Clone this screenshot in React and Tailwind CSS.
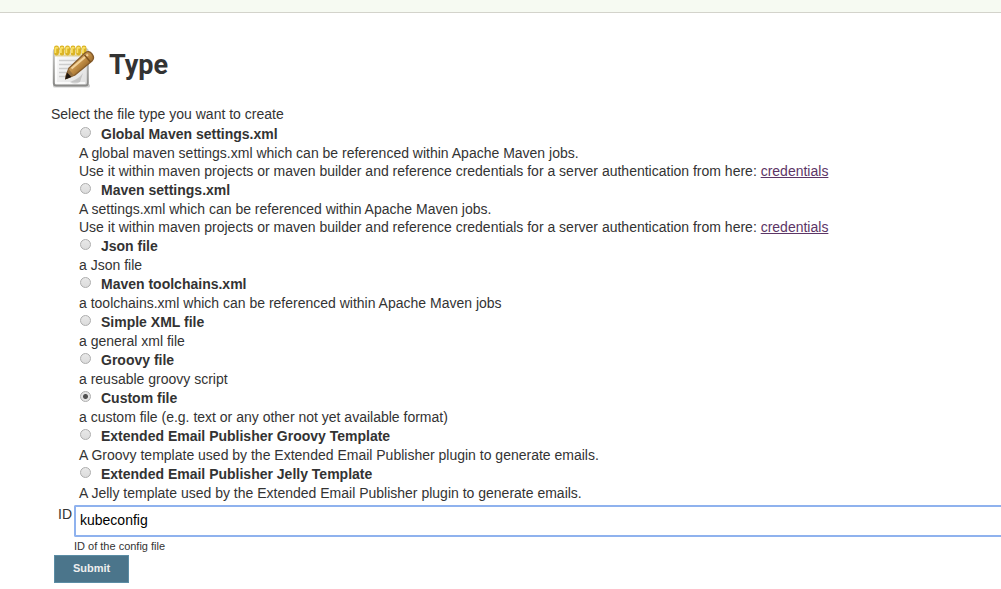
import { useState } from "react";

const mavenHint =
  "Use it within maven projects or maven builder and reference credentials for a server authentication from here: ";

const types = [
  { id: "global-maven", name: "Global Maven settings.xml", text: "A global maven settings.xml which can be referenced within Apache Maven jobs.", hint: true },
  { id: "maven", name: "Maven settings.xml", text: "A settings.xml which can be referenced within Apache Maven jobs.", hint: true },
  { id: "json", name: "Json file", text: "a Json file" },
  { id: "toolchains", name: "Maven toolchains.xml", text: "a toolchains.xml which can be referenced within Apache Maven jobs" },
  { id: "xml", name: "Simple XML file", text: "a general xml file" },
  { id: "groovy", name: "Groovy file", text: "a reusable groovy script" },
  { id: "custom", name: "Custom file", text: "a custom file (e.g. text or any other not yet available format)" },
  { id: "email-groovy", name: "Extended Email Publisher Groovy Template", text: "A Groovy template used by the Extended Email Publisher plugin to generate emails." },
  { id: "email-jelly", name: "Extended Email Publisher Jelly Template", text: "A Jelly template used by the Extended Email Publisher plugin to generate emails." },
];

function NotepadIcon() {
  return (
    <svg viewBox="2 2 46 46" className="size-[46px] shrink-0" aria-hidden="true">
      <defs>
        <linearGradient id="paper" x1="0" y1="0" x2="1" y2="1">
          <stop offset="0" stopColor="#ffffff" />
          <stop offset="1" stopColor="#dedede" />
        </linearGradient>
        <linearGradient id="edge" x1="0" y1="0" x2="0" y2="1">
          <stop offset="0" stopColor="#c9c9c7" />
          <stop offset="1" stopColor="#8a8a88" />
        </linearGradient>
        <linearGradient id="wood" x1="0" y1="0" x2="1" y2="1">
          <stop offset="0.2" stopColor="#e9bd78" />
          <stop offset="0.5" stopColor="#bd8a43" />
          <stop offset="0.8" stopColor="#835317" />
        </linearGradient>
      </defs>
      <rect x="4" y="42" width="37" height="3.5" rx="1.5" fill="#000" opacity="0.2" />
      <rect x="4.8" y="7" width="34" height="36.6" rx="2.5" fill="url(#paper)" stroke="url(#edge)" strokeWidth="2" />
      <path d="M7 14V41H36" fill="none" stroke="#fff" strokeWidth="1.5" />
      <path d="M10 18.5H31M10 22.5H28M10 26.5H24M10 30.5H20M10 34.5H17" stroke="#cdcdcd" strokeWidth="1.5" />
      <path d="M6 13.5H36" stroke="#d8bd5a" strokeWidth="2" opacity="0.6" />
      {[7, 12.5, 18, 23.5, 29, 34.5].map((x) => (
        <g key={x}>
          <rect x={x - 2} y="3.5" width="5" height="10" rx="2.4" fill="#dbb425" />
          <path d={`M${x - 0.6} 11V6.5q1.1-2 2.2 0`} fill="none" stroke="#fbe26a" strokeWidth="1.7" />
        </g>
      ))}
      <path d="M21 40q9-3 13-9l-3 9q-5 3-10 0z" fill="#777" opacity="0.3" />
      <path d="M17 34l3-8L36 11q4-3 7 1t0 7L26 33l-9 3.5z" fill="url(#wood)" stroke="#835a2b" strokeWidth="1.3" />
      <path d="M22.5 26.5L39 12.5" stroke="#f2d29a" strokeWidth="2.2" />
      <path d="M35.5 13l6 7" stroke="#7c501c" strokeWidth="1.5" />
      <path d="M19.5 27l5.5 6.5-8 3.5z" fill="#96703e" />
      <path d="M18 30.5l4.5 4.5-6.5 2.5z" fill="#1f1710" />
    </svg>
  );
}

export default function App() {
  const [selected, setSelected] = useState("custom");
  const [fileId, setFileId] = useState("kubeconfig");

  return (
    <div className="overflow-x-hidden bg-white font-['Liberation_Sans',Arial,sans-serif] text-sm leading-[18px] text-[#333]">
      <header className="h-[13px] border-b border-[#d3d3cb] bg-[#f6faf2]" />
      <main className="pt-8 pl-[51px]">
        <h1 className="flex h-11 items-center gap-3 font-['Roboto',sans-serif] text-[27px] leading-10 font-bold">
          <NotepadIcon />
          <span className="pb-1">Type</span>
        </h1>
        <form onSubmit={(e) => e.preventDefault()}>
          <fieldset className="pt-4">
            <legend className="float-left mb-px w-full">Select the file type you want to create</legend>
            <div className="clear-both pl-7">
              {types.map((type) => (
                <div key={type.id}>
                  <label className="flex h-5 w-fit items-center gap-2.5 pl-px font-bold">
                    <input
                      type="radio"
                      name="type"
                      value={type.id}
                      checked={selected === type.id}
                      onChange={() => setSelected(type.id)}
                      className="mb-[3px] size-[11px] appearance-none rounded-full border border-[#adadad] bg-linear-to-b from-[#e8e8e8] to-[#dcdcdc] checked:bg-[radial-gradient(circle,#505050_0_2px,#e4e4e4_3px)]"
                    />
                    {type.name}
                  </label>
                  <p>{type.text}</p>
                  {type.hint && (
                    <p className="whitespace-nowrap">
                      {mavenHint}
                      <a href="#credentials" className="text-[#5c3566] underline">credentials</a>
                    </p>
                  )}
                </div>
              ))}
            </div>
          </fieldset>
          <div className="mt-[3px] flex">
            <label htmlFor="file-id" className="w-[23px] pr-0.5 text-right">ID</label>
            <div className="grow">
              <input
                id="file-id"
                type="text"
                value={fileId}
                onChange={(e) => setFileId(e.target.value)}
                aria-describedby="file-id-help"
                className="block h-8 w-full rounded-l-xs border-2 border-r-0 border-[#8fb2ee] bg-white px-1 pb-0.5 text-black outline-none"
              />
              <p id="file-id-help" className="text-[11px]">ID of the config file</p>
            </div>
          </div>
          <button type="submit" className="ml-[3px] h-7 border border-[#5b8da5] bg-[#4b758b] px-[18px] pb-0.5 text-[11px] leading-4 font-bold text-[#eee]">
            Submit
          </button>
        </form>
      </main>
    </div>
  );
}
